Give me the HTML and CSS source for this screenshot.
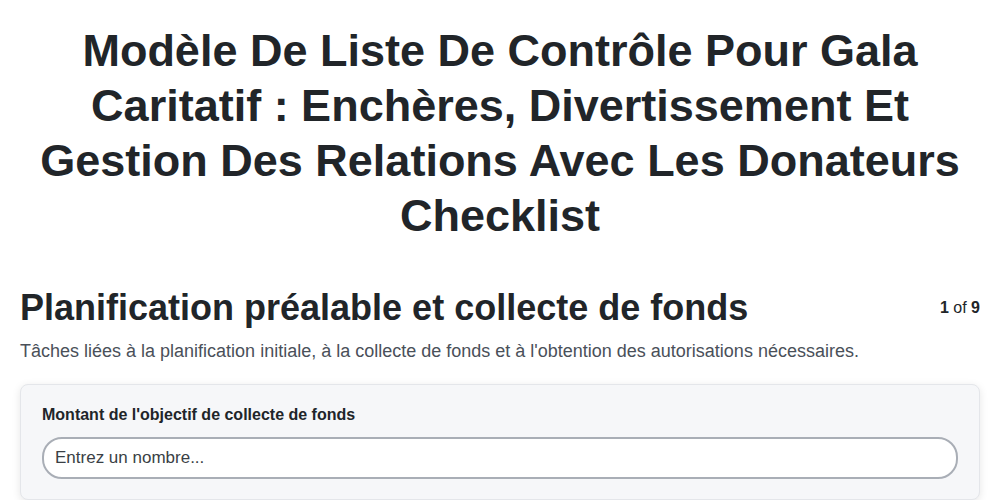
FILE: index.html
```html
<!DOCTYPE html>
<html lang="fr">
<head>
<meta charset="utf-8">
<link rel="stylesheet" href="styles.css">
</head>
<body>
<div class="page">
  <h1 class="title">Modèle De Liste De Contrôle Pour Gala Caritatif : Enchères, Divertissement Et Gestion Des Relations Avec Les Donateurs Checklist</h1>
  <section class="section">
    <div class="section-head">
      <h2 class="section-title">Planification préalable et collecte de fonds</h2>
      <div class="counter"><b>1</b> of <b>9</b></div>
    </div>
    <p class="section-desc">Tâches liées à la planification initiale, à la collecte de fonds et à l'obtention des autorisations nécessaires.</p>
    <div class="card">
      <label class="field-label" for="goal">Montant de l'objectif de collecte de fonds</label>
      <input class="field-input" id="goal" type="text" placeholder="Entrez un nombre...">
    </div>
  </section>
</div>
</body>
</html>
```
FILE: styles.css
```css
* { box-sizing: border-box; }
html, body { margin: 0; padding: 0; background: #fff; }
body {
  font-family: "Liberation Sans", Arial, sans-serif;
  color: #1f2328;
}
.page {
  padding: 23px 20px 0 20px;
}
.title {
  margin: 0 auto;
  max-width: 960px;
  text-align: center;
  font-size: 45px;
  line-height: 55px;
  font-weight: 700;
  color: #212529;
}
.section {
  margin-top: 43px;
}
.section-head {
  display: flex;
  justify-content: space-between;
  align-items: center;
}
.section-title {
  margin: 0;
  font-size: 36px;
  line-height: 44px;
  font-weight: 700;
  color: #212529;
}
.counter {
  font-size: 16px;
  color: #212529;
}
.section-desc {
  margin: 8px 0 0 0;
  font-size: 18px;
  line-height: 27px;
  color: #4a5059;
}
.card {
  margin-top: 19px;
  background: #f6f7f9;
  border: 1px solid #e4e6ea;
  border-radius: 8px;
  box-shadow: 0 2px 8px rgba(0,0,0,0.10);
  padding: 19px 21px 20px 21px;
  display: flex;
  flex-direction: column;
}
.field-label {
  font-size: 16px;
  line-height: 22px;
  font-weight: 700;
  color: #212529;
}
.field-input {
  margin-top: 11px;
  height: 42px;
  border: 2px solid #a9aeb6;
  border-radius: 20px;
  background: #fff;
  padding: 0 11px;
  font-family: "Liberation Sans", Arial, sans-serif;
  font-size: 17px;
  color: #212529;
}
.field-input::placeholder { color: #3a3f45; }
```
